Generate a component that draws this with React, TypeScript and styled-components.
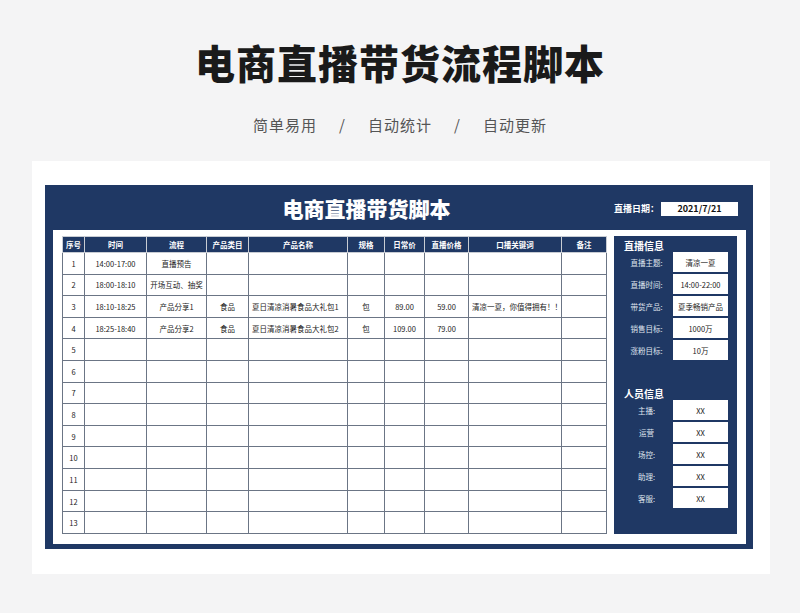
import styled, { createGlobalStyle } from "styled-components";

const Global = createGlobalStyle`
  body { margin: 0; background: #f4f4f5; font-family: "Noto Sans CJK SC", "Noto Sans", sans-serif; }
`;

const navy = "#1f3864";

const Page = styled.div`
  width: 800px;
  height: 613px;
  display: flex;
  flex-direction: column;
  align-items: center;
  overflow: hidden;
`;

const Title = styled.h1`
  margin: 34px 0 0;
  font-size: 40px;
  line-height: 56px;
  font-weight: 900;
  color: #1a1a1a;
  letter-spacing: 1px;
`;

const Sub = styled.div`
  margin-top: 24px;
  font-size: 15px;
  color: #555;
  display: flex;
  gap: 22px;
  letter-spacing: 1px;
`;

const Card = styled.div`
  margin-top: 26px;
  width: 738px;
  height: 413px;
  margin-left: 2px;
  background: #fff;
  padding: 24px 13px 0;
  box-sizing: border-box;
`;

const Panel = styled.div`
  width: 708px;
  height: 364px;
  background: ${navy};
  padding: 0 7px 5px 8px;
  box-sizing: border-box;
  display: flex;
  flex-direction: column;
`;

const Head = styled.div`
  height: 45px;
  display: flex;
  align-items: center;
`;

const HeadTitle = styled.div`
  flex: 1;
  text-align: center;
  color: #fff;
  font-size: 21px;
  font-weight: 900;
  margin-left: 66px;
`;

const DateBox = styled.div`
  display: flex;
  align-items: center;
  color: #fff;
  font-size: 9px;
  font-weight: 700;
  margin-right: 8px;
  margin-top: 2px;
  span { background: #fff; color: #111; width: 77px; height: 14px; display: flex; align-items: center; justify-content: center; margin-left: 2px; }
`;

const Inner = styled.div`
  flex: 1;
  background: #fff;
  display: flex;
  padding: 6px 9px 10px 9px;
  gap: 7px;
`;

const Table = styled.table`
  border-collapse: collapse;
  width: 544px;
  height: 298px;
  table-layout: fixed;
  font-size: 7.5px;
  color: #222;
  td, th { border: 1px solid #6b7585; text-align: center; padding: 0; white-space: nowrap; overflow: hidden; }
  th { background: ${navy}; color: #fff; height: 15px; font-weight: 700; border-color: #c8ccd3; }
  td { height: 20.5px; }
`;

const Cell = styled.td<{ $left?: boolean }>`
  text-align: ${(p) => (p.$left ? "left" : "center")} !important;
  padding-left: ${(p) => (p.$left ? "3px" : "0")} !important;
`;

const Side = styled.div`
  width: 124px;
  background: ${navy};
  padding: 2px 9px 0 6px;
  box-sizing: border-box;
  display: flex;
  flex-direction: column;
`;

const SideTitle = styled.div<{ $gap?: number }>`
  color: #fff;
  font-weight: 700;
  font-size: 10px;
  height: 14px;
  margin-top: ${(p) => p.$gap ?? 0}px;
  padding-left: 4px;
`;

const Row = styled.div`
  display: flex;
  align-items: center;
  height: 20px;
  margin-bottom: 2px;
`;

const Label = styled.div`
  width: 53px;
  color: #dfe4ee;
  font-size: 7.5px;
  text-align: center;
`;

const Value = styled.div`
  flex: 1;
  height: 100%;
  background: #fff;
  font-size: 7.5px;
  display: flex;
  align-items: center;
  justify-content: center;
  color: #222;
`;

const cols = [22, 62, 60, 42, 99, 37, 40, 44, 93, 45];
const headers = ["序号", "时间", "流程", "产品类目", "产品名称", "规格", "日常价", "直播价格", "口播关键词", "备注"];
const data: string[][] = [
  ["1", "14:00-17:00", "直播预告"],
  ["2", "18:00-18:10", "开场互动、抽奖"],
  ["3", "18:10-18:25", "产品分享1", "食品", "夏日清凉消暑食品大礼包1", "包", "89.00", "59.00", "清凉一夏，你值得拥有！！"],
  ["4", "18:25-18:40", "产品分享2", "食品", "夏日清凉消暑食品大礼包2", "包", "109.00", "79.00"],
];
for (let i = 5; i <= 13; i++) data.push([String(i)]);

const info = [["直播主题:", "清凉一夏"], ["直播时间:", "14:00-22:00"], ["带货产品:", "夏季畅销产品"], ["销售目标:", "1000万"], ["涨粉目标:", "10万"]];
const staff = [["主播:", "XX"], ["运营", "XX"], ["场控:", "XX"], ["助理:", "XX"], ["客服:", "XX"]];

export default function App() {
  return (
    <Page>
      <Global />
      <Title>电商直播带货流程脚本</Title>
      <Sub>
        <span>简单易用</span><span>/</span><span>自动统计</span><span>/</span><span>自动更新</span>
      </Sub>
      <Card>
        <Panel>
          <Head>
            <HeadTitle>电商直播带货脚本</HeadTitle>
            <DateBox>直播日期：<span>2021/7/21</span></DateBox>
          </Head>
          <Inner>
            <Table>
              <colgroup>{cols.map((w, i) => <col key={i} style={{ width: w }} />)}</colgroup>
              <thead><tr>{headers.map((h) => <th key={h}>{h}</th>)}</tr></thead>
              <tbody>
                {data.map((r, i) => (
                  <tr key={i}>
                    {cols.map((_, j) => (
                      <Cell key={j} $left={j === 4 || j === 8}>{r[j] ?? ""}</Cell>
                    ))}
                  </tr>
                ))}
              </tbody>
            </Table>
            <Side>
              <SideTitle>直播信息</SideTitle>
              {info.map(([l, v]) => <Row key={l}><Label>{l}</Label><Value>{v}</Value></Row>)}
              <SideTitle $gap={24}>人员信息</SideTitle>
              {staff.map(([l, v]) => <Row key={l}><Label>{l}</Label><Value>{v}</Value></Row>)}
            </Side>
          </Inner>
        </Panel>
      </Card>
    </Page>
  );
}
